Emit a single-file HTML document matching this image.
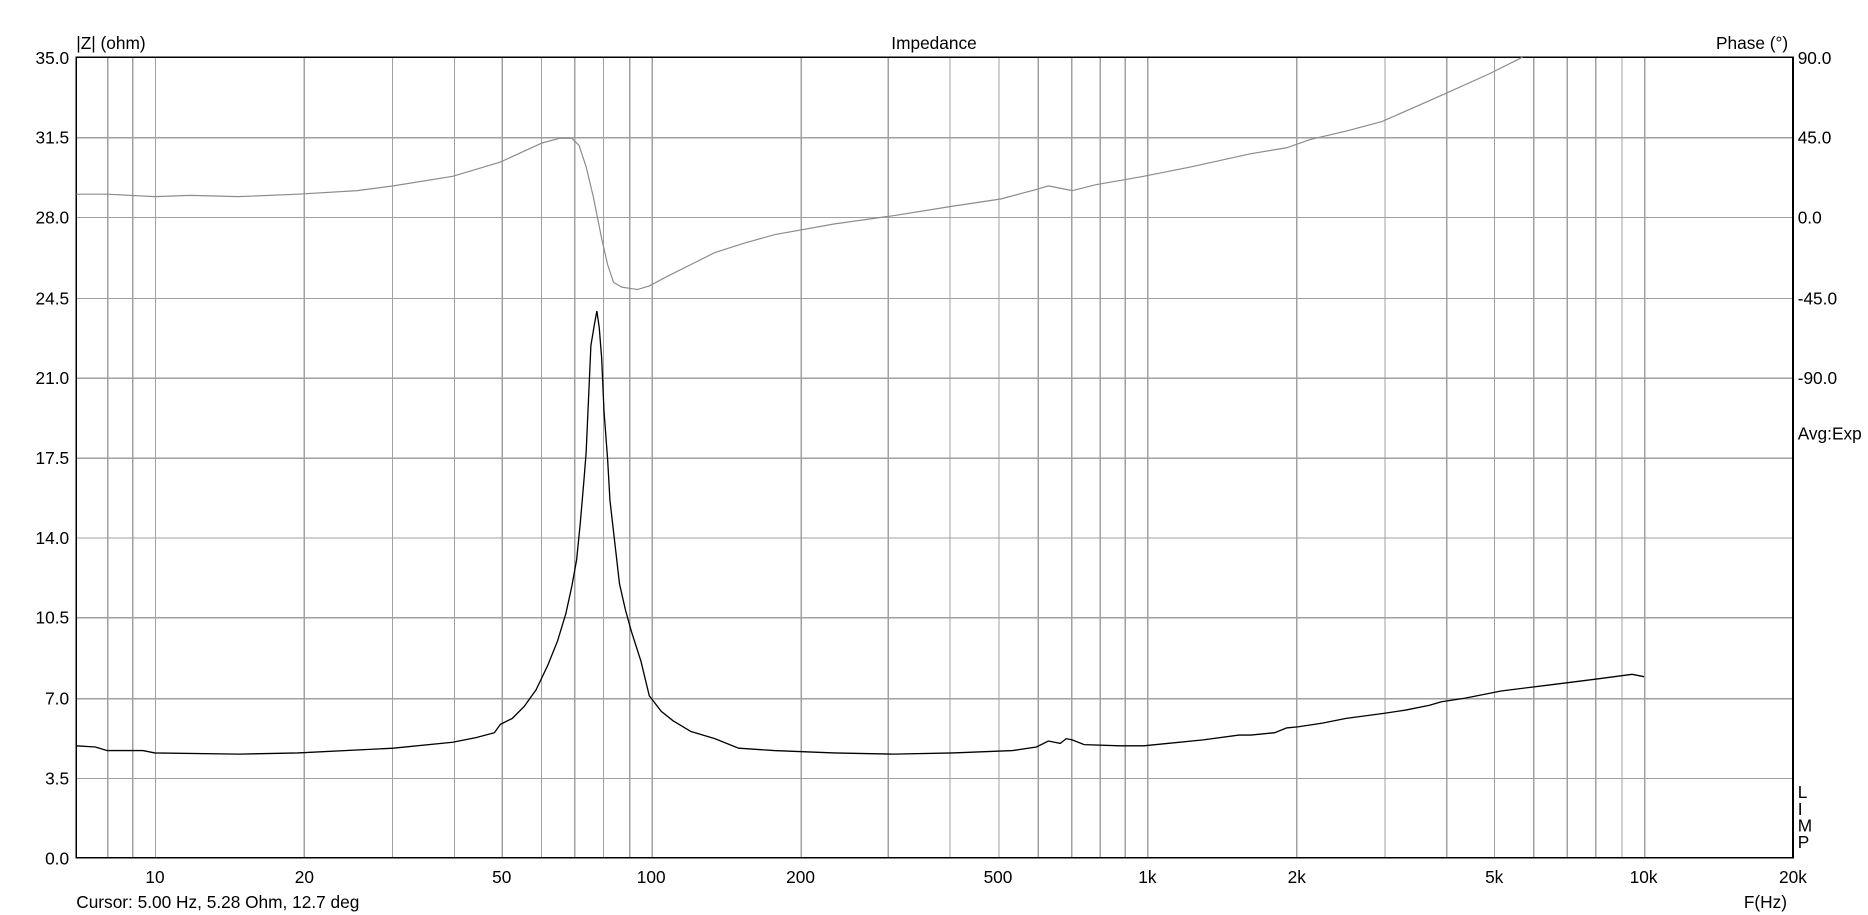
<!DOCTYPE html>
<html><head><meta charset="utf-8"><style>
html,body{margin:0;padding:0;background:#fff;overflow:hidden}
svg{display:block}
text{font-family:"Liberation Sans",Arial,sans-serif;font-size:14.5px;fill:#000}
</style></head><body>
<svg id="s" width="1868" height="915" viewBox="0 0 1568 768" xmlns="http://www.w3.org/2000/svg">
<rect width="1568" height="768" fill="#fff"/>
<g id="grid" stroke="#a0a0a0" stroke-width="1.1" shape-rendering="crispEdges"></g>
<rect x="64" y="48" width="1441" height="672" fill="none" stroke="#000" stroke-width="1.4" shape-rendering="crispEdges"/>
<polyline id="ph" fill="none" stroke="#8c8c8c" stroke-width="1" points="64,163 90,163 130,165 160,164 200,165 250,163 300,160 330,156 380,148 420,136 455,120 470,116 480,116 486,122 492,140 498,165 505,200 510,222 515,237 522,241 535,243 545,240 560,232 580,222 600,212 625,204 650,197 700,188 750,181 800,173 840,167 870,159 880,156 890,158 900,160 920,155 960,148 1000,140 1050,129 1080,124 1100,117 1130,110 1160,102 1210,80 1250,62 1278,48"/>
<polyline id="im" fill="none" stroke="#000" stroke-width="1.1" points="64,626 80,627 90,630 120,630 130,632 200,633 250,632 330,628 380,623 400,619 415,615 420,608 430,603 440,593 450,579 460,558 468,538 475,515 480,492 484,470 487,440 490,405 492,380 494,335 496,290 499,272 501,261 503,275 505,300 507,345 510,385 512,420 516,455 520,490 525,512 530,530 538,555 545,584 555,597 565,605 580,614 600,620 620,628 650,630 700,632 750,633 800,632 850,630 870,627 880,622 890,624 895,620 900,621 910,625 940,626 960,626 980,624 1010,621 1040,617 1050,617 1070,615 1080,611 1090,610 1110,607 1130,603 1160,599 1180,596 1200,592 1210,589 1230,586 1260,580 1300,575 1340,570 1370,566 1380,568"/>
<g id="lab"></g>
<text x="64" y="41">|Z| (ohm)</text>
<text x="784" y="41" text-anchor="middle">Impedance</text>
<text x="1501" y="41" text-anchor="end">Phase (°)</text>
<text x="1509" y="369">Avg:Exp</text>
<text x="1509" y="670">L</text>
<text x="1509" y="684">I</text>
<text x="1509" y="698">M</text>
<text x="1509" y="712">P</text>
<text x="64" y="762">Cursor: 5.00 Hz, 5.28 Ohm, 12.7 deg</text>
<text x="1500" y="762" text-anchor="end">F(Hz)</text>
</svg>
<script>
var ns="http://www.w3.org/2000/svg",g=document.getElementById("grid"),lab=document.getElementById("lab");
var L=64,R=1505,T=48,B=720,fmin=6.94,dec=(R-L)/Math.log10(20000/fmin);
function X(f){return L+dec*Math.log10(f/fmin);}
function line(x1,y1,x2,y2){var l=document.createElementNS(ns,"line");l.setAttribute("x1",x1);l.setAttribute("y1",y1);l.setAttribute("x2",x2);l.setAttribute("y2",y2);g.appendChild(l);}
function txt(x,y,s,a){var t=document.createElementNS(ns,"text");t.setAttribute("x",x);t.setAttribute("y",y);if(a)t.setAttribute("text-anchor",a);t.textContent=s;lab.appendChild(t);}
[1,10,100,1000,10000].forEach(function(d){for(var m=1;m<10;m++){var f=d*m;if(f<8||f>=20000)continue;var x=Math.round(X(f))+0.5;line(x,T,x,B);}});
var yl=["35.0","31.5","28.0","24.5","21.0","17.5","14.0","10.5","7.0","3.5","0.0"];
var pl=["90.0","45.0","0.0","-45.0","-90.0"];
for(var i=0;i<=10;i++){var y=Math.round(T+i*67.2)+0.5;if(i>0&&i<10)line(L,y,R,y);txt(58,y+5,yl[i],"end");if(i<5)txt(1509,y+5,pl[i]);}
[[10,"10"],[20,"20"],[50,"50"],[100,"100"],[200,"200"],[500,"500"],[1000,"1k"],[2000,"2k"],[5000,"5k"],[10000,"10k"],[20000,"20k"]].forEach(function(p){txt(X(p[0]),741,p[1],"middle");});
</script>
</body></html>
